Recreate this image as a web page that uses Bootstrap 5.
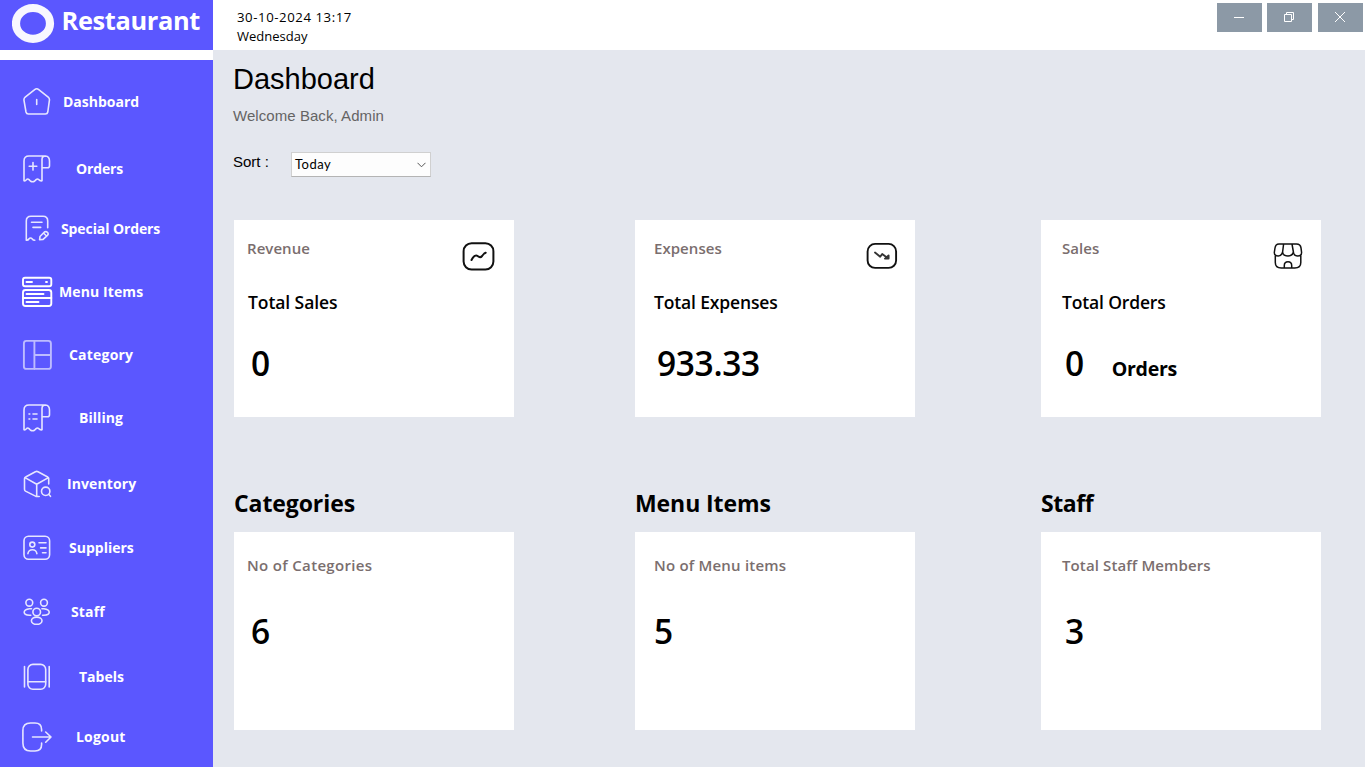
<!DOCTYPE html>
<html lang="en">
<head>
<meta charset="utf-8">
<meta name="viewport" content="width=device-width, initial-scale=1">
<title>Restaurant Dashboard</title>
<link href="https://cdn.jsdelivr.net/npm/bootstrap@5.3.0/dist/css/bootstrap.min.css" rel="stylesheet">
<style>
  body { font-family: "Open Sans", "Noto Sans", sans-serif; background: #e4e7ee; color: #000; height: 767px; overflow: hidden; }
  .side { width: 213px; height: 767px; }
  .indigo { background: #5b57ff; }
  .brand { height: 50px; margin-bottom: 10px; padding-left: 12px; color: #fff; }
  .brand svg { margin-top: 3px; }
  .brand-name { font-size: 25.4px; font-weight: 700; line-height: 40px; margin-left: 6.5px; letter-spacing: -.35px; }
  .menu { padding-top: 25px; }
  .menu a { height: 32px; padding-left: 21px; color: #fff; font-size: 14px; font-weight: 700; letter-spacing: 0; text-decoration: none; white-space: nowrap; }
  .menu svg { fill: none; stroke: #fff; stroke-width: 1.6; stroke-linecap: round; stroke-linejoin: round; opacity: .85; flex: none; }
  .m-dash span { margin-left: 10px; }
  .m-orders { margin-top: 35px; } .m-orders span { margin-left: 23px; letter-spacing: -.15px; }
  .m-special { margin-top: 28px; } .m-special span { margin-left: 8px; letter-spacing: -.1px; }
  .m-items { margin-top: 31px; } .m-items span { margin-left: 6px; letter-spacing: .1px; }
  .menu .m-items svg { stroke-width: 1.9; opacity: 1; }
  .m-cat { margin-top: 31px; } .m-cat span { margin-left: 16px; letter-spacing: .2px; }
  .menu .m-cat svg { opacity: .6; stroke-width: 1.9; }
  .m-bill { margin-top: 31px; } .m-bill span { margin-left: 26px; letter-spacing: .05px; }
  .m-inv { margin-top: 34px; } .m-inv span { margin-left: 14px; letter-spacing: .1px; }
  .m-sup { margin-top: 32px; } .m-sup span { margin-left: 16px; }
  .m-staff { margin-top: 32px; } .m-staff span { margin-left: 18px; letter-spacing: .15px; }
  .m-tab { margin-top: 33px; } .m-tab span { margin-left: 26px; }
  .m-out { margin-top: 28px; } .m-out span { margin-left: 23px; letter-spacing: .2px; }
  .topbar { height: 50px; padding: 3px 2px 0 24px; }
  .clock { font-size: 13px; line-height: 19px; margin-top: 5px; }
  .stamp { font-size: 13.2px; letter-spacing: .57px; }
  .win { width: 45px; height: 29px; background: #8c99a6; border: 0; }
  .win-restore { margin-left: 5px; }
  .win-close { margin-left: 6px; }
  .win svg { fill: none; stroke: #fff; stroke-width: 1; display: block; }
  .page-head { font-family: "Liberation Sans", sans-serif; height: 170px; padding: 11px 0 0 20px; }
  .page-head h1 { font-size: 29px; line-height: 36px; margin: 0; font-weight: 400; }
  .welcome { font-size: 15px; letter-spacing: .06px; line-height: 18px; margin-top: 10px; color: #646464; }
  .sortrow { margin-top: 27px; }
  .sortrow label { width: 58px; font-size: 15px; line-height: 20px; }
  .pick { width: 140px; height: 25px; background: #fdfdfd; border: 1px solid #d0d0d0; border-bottom-color: #b4b4b4; font-family: Lato, sans-serif; font-size: 13px; letter-spacing: .5px; padding: 0 4px 0 3px; }
  .tiles { display: grid; grid-template-columns: 401px 406px 280px; padding-left: 21px; }
  .tile { width: 280px; background: #fff; position: relative; }
  .upper .tile { height: 197px; padding-top: 17px; }
  .lower .tile { height: 198px; padding-top: 22px; }
  .t-a { padding-left: 13px; }
  .t-b { padding-left: 19px; }
  .t-c { padding-left: 21px; }
  .cap { font-size: 15px; line-height: 22px; font-weight: 600; letter-spacing: .05px; color: #7a6e6e; }
  .lower .cap { letter-spacing: .2px; }
  .lower .t-a .cap { letter-spacing: .33px; }
  .lower .t-c .cap { letter-spacing: .12px; }
  .sub { font-size: 17.5px; line-height: 26px; font-weight: 600; margin-top: 30px; letter-spacing: -.15px; }
  .t-a .sub { padding-left: 1px; letter-spacing: -.08px; }
  .num { font-size: 33.5px; line-height: 46px; font-weight: 600; margin-top: 25px; padding-left: 3px; letter-spacing: -.35px; }
  .t-a .num { padding-left: 4px; }
  .lower .num { margin-top: 32px; }
  .lower .t-b .num { padding-left: 0; }
  .unit { font-size: 19.6px; font-weight: 700; margin-left: 28px; }
  .tile-icon { position: absolute; right: 16px; top: 20px; fill: none; stroke: #111; stroke-linecap: round; stroke-linejoin: round; }
  .t-a .tile-icon { right: 18px; }
  .titles { height: 115px; padding-top: 69px; }
  .titles h2 { font-size: 23px; line-height: 34px; font-weight: 700; margin: 0; letter-spacing: -.08px; }
  .titles h2:last-child { letter-spacing: -.4px; }
</style>
</head>
<body class="d-flex">
<aside class="side d-flex flex-column bg-white flex-shrink-0">
  <div class="brand indigo d-flex">
    <svg width="43" height="41" viewBox="0 0 43 41"><ellipse cx="21" cy="20.4" rx="17" ry="15.4" fill="none" stroke="#f8f7ff" stroke-width="8.2"/></svg>
    <span class="brand-name">Restaurant</span>
  </div>
  <nav class="menu indigo flex-grow-1 d-flex flex-column">
    <a href="#" class="m-dash d-flex align-items-center"><svg width="32" height="32"><path d="M14 4.400q1.700-1.200 3.400 0L27.200 12.200q1.600 1.300 1.200 3.200L26.800 27q-.4 2-2.400 2H7.400q-2 0-2.400-2L3 15.400q-.3-2 1.200-3.200zM15.700 14.500v5"/></svg><span>Dashboard</span></a>
    <a href="#" class="m-orders d-flex align-items-center"><svg width="32" height="32"><path d="M21 28.800V7.500q0-3.500 3.500-3.500q4 .3 4 5v4.700q0 2-2 2H21M24.500 4H8Q3 4 3 9v19.800q1.500.3 2.500-1.200q1.200-1.200 2.500 0l1.600 1.600q2 1.200 3.900 0l1.600-1.600q1.400-1.200 2.600 0q1.200 1.500 3.300 1.200M12 10.500v7.600M8.200 14.300h7.600"/></svg><span>Orders</span></a>
    <a href="#" class="m-special d-flex align-items-center"><svg width="32" height="32"><path d="M26.700 15.700V9q0-4.700-4.700-4.700H10Q5.300 4.300 5.300 9v19.200q1.700.3 2.500-1.200q1.800-2 3.500 0q.8 1.200 2.500 1.200M10.500 10.200h10.500M12 15.400h7.700M18.600 27.700l.4-3.200l4.400-4.500q1.700-1 3.200.5q1.200 1.500-.2 2.900l-4.300 4zM22.500 21l3 3"/></svg><span>Special Orders</span></a>
    <a href="#" class="m-items d-flex align-items-center"><svg width="32" height="32"><rect x="2" y="2.700" width="28.300" height="8.600" rx="2"/><rect x="2" y="15" width="28.300" height="16" rx="2.500"/><path d="M2 23h28.300M5.500 7H11M25 7h1M5.500 19H22.500M5.500 27H17.500"/></svg><span>Menu Items</span></a>
    <a href="#" class="m-cat d-flex align-items-center"><svg width="32" height="32"><path d="M5.400 2.900h22q2.500 0 2.500 2.500v23q0 2.500-2.500 2.500h-22q-2.500 0-2.500-2.500v-23q0-2.500 2.500-2.500zM13.400 3v28M13.400 17h16.500"/></svg><span>Category</span></a>
    <a href="#" class="m-bill d-flex align-items-center"><svg width="32" height="32"><path d="M21 28.800V7.500q0-3.500 3.500-3.500q4 .3 4 5v4.700q0 2-2 2H21M24.500 4H8Q3 4 3 9v19.800q1.500.3 2.500-1.200q1.200-1.200 2.500 0l1.600 1.600q2 1.200 3.900 0l1.600-1.600q1.400-1.200 2.600 0q1.200 1.500 3.300 1.200M8 13h.8M12 13h4M8 18h.8M12 18h4"/></svg><span>Billing</span></a>
    <a href="#" class="m-inv d-flex align-items-center"><svg width="32" height="32"><path d="M27.700 17v-5.500q0-1-1-1.500L17 4.700q-1.300-.6-2.600 0L4.600 10q-1.100.5-1.100 1.700v10.600q0 1.200 1 1.800l10 5q.6.400 1.200.4V17.200L4 10.600M15.700 17.200L27.400 10.600M15.700 29.500h2.500M27.900 27.500l1.600 1.800"/><circle cx="24.700" cy="24.300" r="4.200"/></svg><span>Inventory</span></a>
    <a href="#" class="m-sup d-flex align-items-center"><svg width="32" height="32"><rect x="3" y="5.300" width="25.600" height="23" rx="4.500"/><circle cx="11.300" cy="13.600" r="2.500"/><path d="M6.900 22.700q.6-4 4.500-4t4.500 4M18 11.700h7M19.600 16.900H25M21.500 21.800H25"/></svg><span>Suppliers</span></a>
    <a href="#" class="m-staff d-flex align-items-center"><svg width="32" height="32"><circle cx="8.300" cy="7.700" r="3.400"/><circle cx="23" cy="7.700" r="3.400"/><circle cx="15.700" cy="17" r="3.800"/><ellipse cx="15.700" cy="25.700" rx="5.300" ry="3.600"/><path d="M10.500 13.700H8.500Q3.200 14.500 3.200 17.200T8.500 20.300H9.800M20.900 13.700h2Q28.200 14.500 28.200 17.200T22.900 20.300H21.600"/></svg><span>Staff</span></a>
    <a href="#" class="m-tab d-flex align-items-center"><svg width="32" height="32"><rect x="6.900" y="4.400" width="17.800" height="24.800" rx="5"/><path d="M6.900 21.700h17.800M3.500 6.500v20.500M28.200 6.500v20.500"/></svg><span>Tabels</span></a>
    <a href="#" class="m-out d-flex align-items-center"><svg width="32" height="32"><path d="M20.600 11V9.500Q20.600 3 14 3H9.500Q1.900 3 1.900 10.500v12.500Q1.900 31 9.500 31H14q6.600 0 6.600-6.500V23M11.500 17H30M24.700 12l5.300 5l-5.300 5.200"/></svg><span>Logout</span></a>
  </nav>
</aside>
<main class="flex-grow-1">
  <header class="topbar bg-white d-flex">
    <div class="clock"><span class="stamp">30-10-2024 13:17</span><br>Wednesday</div>
    <div class="d-flex ms-auto">
      <button class="win p-0" aria-label="Minimize"><svg width="45" height="29"><path d="M17 14.500h10"/></svg></button>
      <button class="win win-restore p-0" aria-label="Restore"><svg width="45" height="29"><path d="M17.500 11.500h7v7h-7zM19.500 11.500v-2h7v7h-2"/></svg></button>
      <button class="win win-close p-0" aria-label="Close"><svg width="45" height="29"><path d="M17 9l10 10M27 9l-10 10"/></svg></button>
    </div>
  </header>
  <section class="page-head">
    <h1>Dashboard</h1>
    <div class="welcome">Welcome Back, Admin</div>
    <div class="sortrow d-flex">
      <label>Sort :</label>
      <div class="pick d-flex align-items-center justify-content-between"><span>Today</span><svg width="9" height="6"><path d="M.5.800l4 4l4-4" fill="none" stroke="#555"/></svg></div>
    </div>
  </section>
  <section class="tiles upper">
    <div class="tile t-a">
      <div class="cap">Revenue</div><div class="sub">Total Sales</div><div class="num">0</div>
      <svg class="tile-icon" width="34" height="32" stroke-width="2"><rect x="1.600" y="3.200" width="29.800" height="26.400" rx="8"/><path d="M9.500 20q2.500-4.700 4.700-4.500q1.200.1 2.500 1.200q1.800 1.200 3.400-.7l1.600-2q.6-.8 2-1.300"/></svg>
    </div>
    <div class="tile t-b">
      <div class="cap">Expenses</div><div class="sub">Total Expenses</div><div class="num">933.33</div>
      <svg class="tile-icon" width="34" height="32" stroke-width="1.900"><rect x="2.600" y="3.900" width="28.500" height="24" rx="7.500"/><path d="M10 12.500l5.200 4.200l2-2.700l5 3.700M20 18.600h3.600V15.400z" stroke="#333"/></svg>
    </div>
    <div class="tile t-c">
      <div class="cap">Sales</div><div class="sub">Total Orders</div><div class="num">0<span class="unit">Orders</span></div>
      <svg class="tile-icon" width="34" height="32" stroke-width="1.500"><path d="M4.300 16v6.500q0 5.500 6 5.500h13.500q6 0 6-5.500V16M8 3.900h17.500q4 0 4.500 4l.6 4.600q0 3.500-3.800 3.500q-4 0-4.400-4q-1 4-5.400 4q-5 0-5.400-4q-1 4-4.400 4q-3.900 0-3.900-3.500L4 8q.5-4.100 4-4.100zM12.600 4l-1 8M21 4l1.400 8M13.300 28v-2.500q0-3.800 3.700-3.800t3.700 3.800V28"/></svg>
    </div>
  </section>
  <section class="tiles titles"><h2>Categories</h2><h2>Menu Items</h2><h2>Staff</h2></section>
  <section class="tiles lower">
    <div class="tile t-a"><div class="cap">No of Categories</div><div class="num">6</div></div>
    <div class="tile t-b"><div class="cap">No of Menu items</div><div class="num">5</div></div>
    <div class="tile t-c"><div class="cap">Total Staff Members</div><div class="num">3</div></div>
  </section>
</main>
<script src="https://cdn.jsdelivr.net/npm/bootstrap@5.3.0/dist/js/bootstrap.bundle.min.js"></script>
</body>
</html>
